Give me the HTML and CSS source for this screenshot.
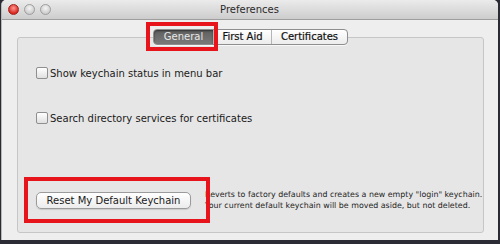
FILE: index.html
```html
<!DOCTYPE html>
<html lang="en">
<head>
    <meta charset="UTF-8">
    <title>Preferences</title>
    <link rel="stylesheet" href="styles.css">
</head>
<body>
    <div class="window">
        <div class="titlebar">
            <div class="lights">
                <span class="light light-close"></span>
                <span class="light"></span>
                <span class="light"></span>
            </div>
            <div class="title">Preferences</div>
        </div>

        <div class="content">
            <div class="tabs">
                <div class="tab tab-active">General</div>
                <div class="tab">First Aid</div>
                <div class="tab">Certificates</div>
                <div class="mark mark-tab"></div>
            </div>

            <div class="group">
                <label class="option option-first">
                    <span class="checkbox"></span>
                    Show keychain status in menu bar
                </label>
                <label class="option option-second">
                    <span class="checkbox"></span>
                    Search directory services for certificates
                </label>

                <div class="actions">
                    <div class="btn-wrap">
                        <button class="btn">Reset My Default Keychain</button>
                        <div class="mark mark-btn"></div>
                    </div>
                    <p class="note">Reverts to factory defaults and creates a new empty "login" keychain.<br>Your current default keychain will be moved aside, but not deleted.</p>
                </div>
            </div>
        </div>
    </div>
</body>
</html>
```

FILE: styles.css
```css
/* Ventana de preferencias */
* {
    margin: 0;
    padding: 0;
    box-sizing: border-box;
}

body {
    font-family: 'DejaVu Sans', sans-serif;
    font-size: 10px;
    color: #1a1a1a;
    background: #2a2b35;
    width: 500px;
    height: 244px;
    overflow: hidden;
}

.window {
    width: 497px;
    height: 240px;
    margin-left: 1px;
    background: #eeeeee;
    border-radius: 5px 5px 0 0;
    border-left: 1px solid #b8b8b8;
    overflow: hidden;
}

.titlebar {
    height: 20px;
    display: flex;
    align-items: center;
    background: linear-gradient(#ebebeb, #cdcdcd);
    border-bottom: 1px solid #9e9e9e;
}

.lights {
    display: flex;
    gap: 5px;
    padding-left: 6px;
}

.light {
    width: 11px;
    height: 11px;
    border-radius: 50%;
    background: radial-gradient(circle at 50% 35%, #f4f4f4, #bdbdbd);
    border: 1px solid #9d9d9d;
}

.light-close {
    background: radial-gradient(circle at 50% 35%, #ff9a94, #d7261f 70%);
    border-color: #a5221c;
}

.title {
    flex: 1;
    text-align: center;
    margin-right: 50px;
    color: #2a2a2a;
}

.content {
    padding: 9px 14px 0 15px;
}

.tabs {
    display: flex;
    position: relative;
    z-index: 1;
    width: 195px;
    height: 16px;
    margin: 0 auto;
    border: 1px solid #8e8e8e;
    border-radius: 4px;
    background: linear-gradient(#ffffff, #ececec);
    box-shadow: 0 1px 0 rgba(255,255,255,0.7);
}

.tab {
    display: flex;
    align-items: center;
    justify-content: center;
    line-height: 14px;
    font-size: 10px;
    color: #111;
    -webkit-text-stroke: 0.2px #111;
    border-left: 1px solid #b5b5b5;
}

.tab:nth-child(1) { width: 59px; border-left: none; }
.tab:nth-child(2) { width: 58px; }
.tab:nth-child(3) { flex: 1; }

.tab-active {
    color: #e8e8e8;
    -webkit-text-stroke: 0;
    background: linear-gradient(#5f5f5f, #7a7a7a);
    border-radius: 3px 0 0 3px;
    box-shadow: inset 0 1px 2px rgba(0,0,0,0.5);
}

.group {
    display: flex;
    flex-direction: column;
    height: 196px;
    margin-top: -8px;
    border: 1px solid #c6c6c6;
    border-radius: 3px;
    background: #e6e6e6;
    padding: 28px 0 20px 18px;
}

.option {
    display: flex;
    align-items: center;
    gap: 2px;
    height: 14px;
}

.option-second {
    margin-top: 31px;
}

.checkbox {
    width: 12px;
    height: 12px;
    border: 1px solid #8f8f8f;
    border-radius: 2px;
    background: linear-gradient(#ffffff, #e0e0e0);
}

.actions {
    margin-top: auto;
    display: flex;
    align-items: center;
    height: 24px;
}

.btn-wrap {
    position: relative;
}

.btn {
    display: block;
    width: 155px;
    height: 17px;
    font-family: inherit;
    font-size: 10px;
    color: #1a1a1a;
    border: 1px solid #9b9b9b;
    border-radius: 5px;
    background: linear-gradient(#ffffff, #ececec);
    box-shadow: 0 1px 1px rgba(0,0,0,0.12);
}

.note {
    margin-left: 14px;
    font-size: 7.9px;
    line-height: 11px;
    white-space: nowrap;
    color: #1e1e1e;
}

/* Recuadros rojos de anotacion */
.mark {
    position: absolute;
    border: 4px solid #e8141b;
    z-index: 2;
}

.mark-tab {
    left: -8px;
    top: -8px;
    width: 72px;
    height: 29px;
}

.mark-btn {
    left: -12px;
    top: -15px;
    width: 186px;
    height: 46px;
}
```
